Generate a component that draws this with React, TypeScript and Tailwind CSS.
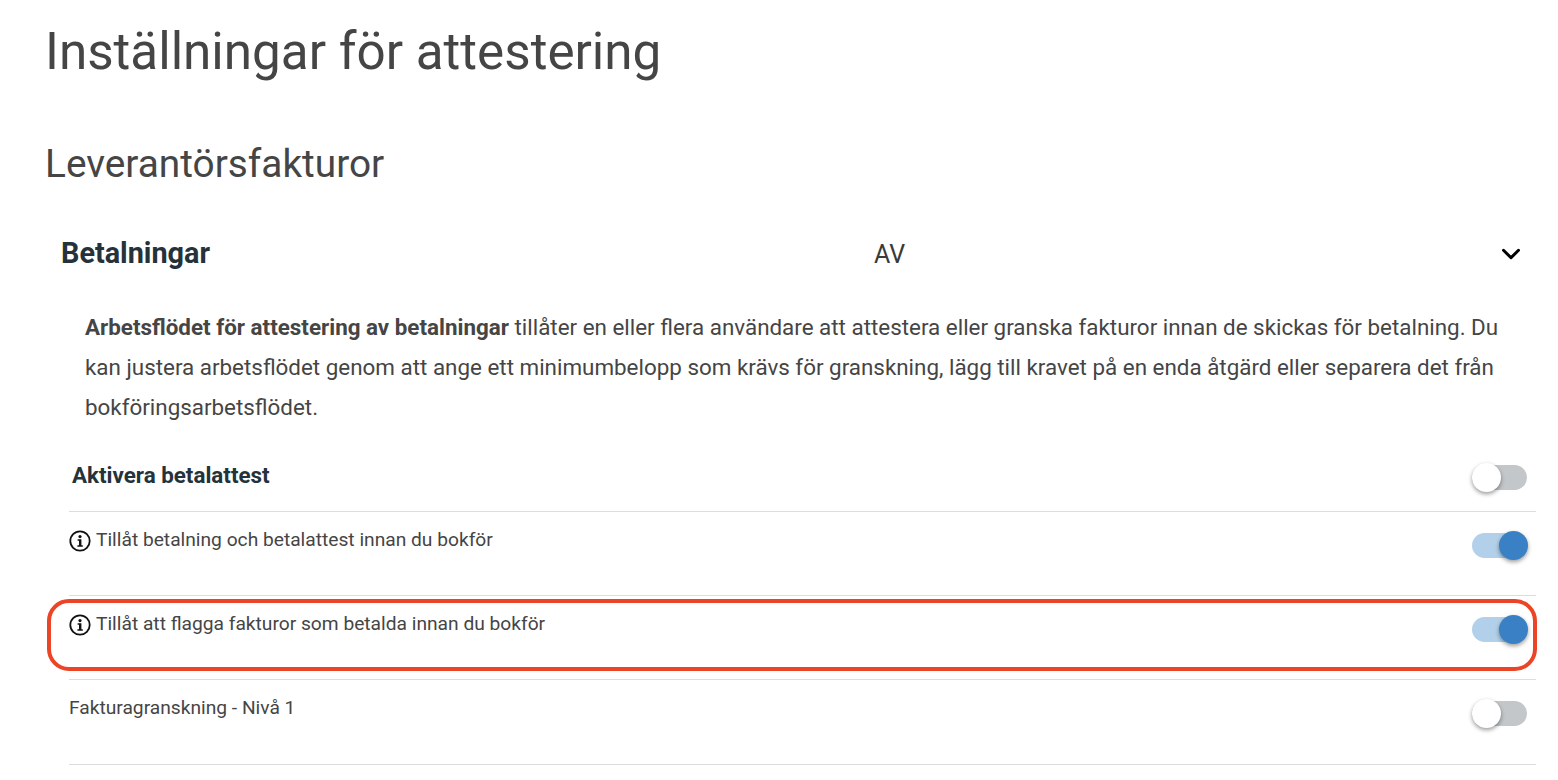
import React from 'react';
import { ChevronDown } from 'lucide-react';

function Toggle({ on }: { on: boolean }) {
  return (
    <div className={on ? 'relative w-[55px] h-[25px] rounded-full bg-[#b3d0ea]' : 'relative w-[55px] h-[25px] rounded-full bg-[#c3c7c9]'}>
      <div
        className={
          on
            ? 'absolute right-[-1px] top-[-2px] w-[29px] h-[29px] rounded-full bg-[#3a80c5] shadow-[0_2px_4px_rgba(0,0,0,0.4)]'
            : 'absolute left-0 top-[-2px] w-[29px] h-[29px] rounded-full bg-white shadow-[0_2px_4px_rgba(0,0,0,0.4)]'
        }
      />
    </div>
  );
}

function InfoIcon() {
  return (
    <svg width="22" height="22" viewBox="0 0 22 22" className="shrink-0 mt-[2px]">
      <circle cx="11" cy="11" r="9.7" fill="none" stroke="#111" strokeWidth="1.8" />
      <circle cx="11" cy="6.6" r="1.6" fill="#111" />
      <path d="M8.6 9.2h3.8v6h1.4v1.6H8.4v-1.6H10v-4.4H8.6z" fill="#111" />
    </svg>
  );
}

export default function App() {
  return (
    <div className="w-[1558px] h-[780px] overflow-hidden bg-white font-['Roboto',sans-serif] text-[#454545]">
      <div className="pl-[45px] pt-[21px]">
        <h1 className="text-[51.2px] leading-[62px]">Inställningar för attestering</h1>
        <h2 className="text-[38.8px] leading-[46px] mt-[58px]">Leverantörsfakturor</h2>
      </div>

      <div className="flex items-center h-[40px] mt-[47px] pl-[61px] pr-[32px]">
        <div className="w-[813px] text-[28.8px] font-bold text-[#26323a]">Betalningar</div>
        <div className="flex-1 text-[25px] text-[#3a3a3a] pt-[1px]">AV</div>
        <ChevronDown className="w-[30px] h-[30px] text-black" strokeWidth={2.4} />
      </div>

      <p className="ml-[85px] mr-[52px] mt-[33px] text-[22.4px] leading-[40px] text-[#454545]">
        <b className="font-bold">Arbetsflödet för attestering av betalningar</b> tillåter en eller flera användare att attestera eller granska fakturor innan de skickas för betalning. Du kan justera arbetsflödet genom att ange ett minimumbelopp som krävs för granskning, lägg till kravet på en enda åtgärd eller separera det från bokföringsarbetsflödet.
      </p>

      <div className="ml-[69px] w-[1467px] mt-[16px]">
        <div className="flex justify-between h-[69px] pt-[19px] pl-[3px] pr-[9px] border-b border-[#dddddd]">
          <span className="text-[22.4px] leading-[26px] font-bold text-[#26323a]">Aktivera betalattest</span>
          <div className="mt-[3px]"><Toggle on={false} /></div>
        </div>

        <div className="flex justify-between h-[84px] pt-[16px] pr-[9px] border-b border-[#dddddd]">
          <div className="flex items-start gap-[5px] text-[19.2px] leading-[24px]">
            <InfoIcon />
            <span>Tillåt betalning och betalattest innan du bokför</span>
          </div>
          <div className="mt-[5px]"><Toggle on /></div>
        </div>

        <div className="relative flex justify-between h-[84px] pt-[16px] pr-[9px] border-b border-[#dddddd]">
          <div className="flex items-start gap-[5px] text-[19.2px] leading-[24px]">
            <InfoIcon />
            <span>Tillåt att flagga fakturor som betalda innan du bokför</span>
          </div>
          <div className="mt-[5px]"><Toggle on /></div>
          <div className="absolute left-[-22px] top-[3px] w-[1490px] h-[72px] border-[4px] border-[#ec4426] rounded-[22px]" />
        </div>

        <div className="flex justify-between h-[85px] pt-[16px] pr-[9px] border-b border-[#dddddd]">
          <span className="text-[19.2px] leading-[24px]">Fakturagranskning - Nivå 1</span>
          <div className="mt-[5px]"><Toggle on={false} /></div>
        </div>
      </div>
    </div>
  );
}
